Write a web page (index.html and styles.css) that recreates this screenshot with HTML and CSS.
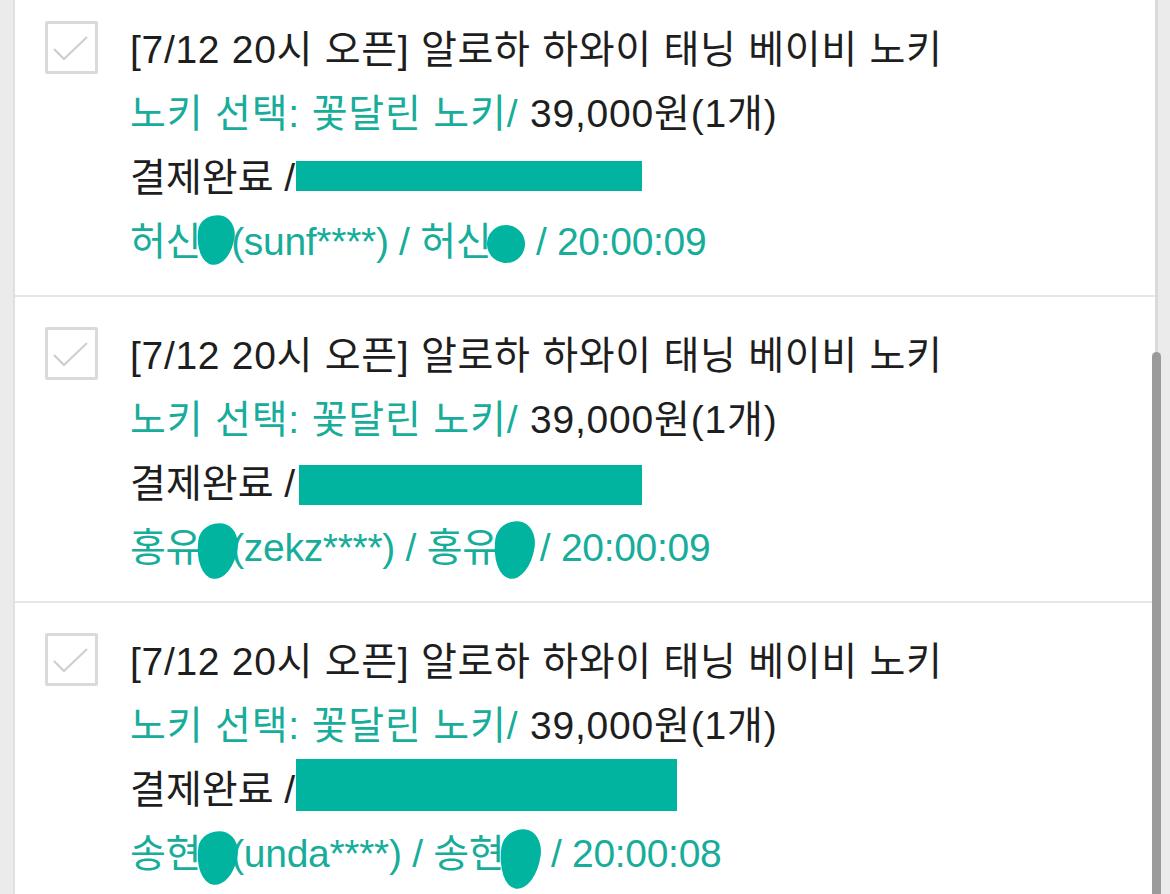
FILE: index.html
```html
<!DOCTYPE html>
<html lang="ko">
<head>
<meta charset="utf-8">
<title>주문 목록</title>
<link rel="stylesheet" href="styles.css">
</head>
<body>
<div class="frame">
  <div class="panel">
    <div class="list">
      <div class="item">
        <div class="check"><svg viewBox="0 0 53 53" width="53" height="53"><path d="M9 28 L19 38 L42 16" fill="none" stroke="#cfcfcf" stroke-width="2.2"/></svg></div>
        <div class="body">
          <div class="line title">[7/12 20시 오픈] 알로하 하와이 태닝 베이비 노키</div>
          <div class="line option"><span class="teal">노키 선택: 꽃달린 노키/</span> 39,000원(1개)</div>
          <div class="line">결제완료 /<span class="redact r1"></span></div>
          <div class="line buyer teal">허신<span class="blob b1"></span>(sunf****) / 허신<span class="blob b2"></span> / 20:00:09</div>
        </div>
      </div>
      <div class="item">
        <div class="check"><svg viewBox="0 0 53 53" width="53" height="53"><path d="M9 28 L19 38 L42 16" fill="none" stroke="#cfcfcf" stroke-width="2.2"/></svg></div>
        <div class="body">
          <div class="line title">[7/12 20시 오픈] 알로하 하와이 태닝 베이비 노키</div>
          <div class="line option"><span class="teal">노키 선택: 꽃달린 노키/</span> 39,000원(1개)</div>
          <div class="line">결제완료 /<span class="redact r2"></span></div>
          <div class="line buyer teal">홍유<span class="blob b3"></span>(zekz****) / 홍유<span class="blob b4"></span>/ 20:00:09</div>
        </div>
      </div>
      <div class="item">
        <div class="check"><svg viewBox="0 0 53 53" width="53" height="53"><path d="M9 28 L19 38 L42 16" fill="none" stroke="#cfcfcf" stroke-width="2.2"/></svg></div>
        <div class="body">
          <div class="line title">[7/12 20시 오픈] 알로하 하와이 태닝 베이비 노키</div>
          <div class="line option"><span class="teal">노키 선택: 꽃달린 노키/</span> 39,000원(1개)</div>
          <div class="line">결제완료 /<span class="redact r3"></span></div>
          <div class="line buyer teal">송현<span class="blob b5"></span>(unda****) / 송현<span class="blob b6"></span> / 20:00:08</div>
        </div>
      </div>
    </div>
  </div>
  <div class="thumb"></div>
</div>
</body>
</html>
```

FILE: styles.css
```css
html, body {
  margin: 0;
  padding: 0;
  background: #ebebeb;
}
body {
  width: 1170px;
  height: 894px;
  overflow: hidden;
  font-family: "Liberation Sans", "Noto Sans CJK KR", sans-serif;
  color: #1e1e1e;
}
.frame {
  position: relative;
  height: 894px;
  display: flex;
}
.panel {
  margin: 0 12px 0 13px;
  flex: 1;
  background: #fff;
  border-left: 2px solid #e0e0e0;
  border-right: 3px solid #dadada;
  overflow: hidden;
}
.list {
  margin-top: -9px;
}
.item {
  display: flex;
  gap: 32px;
  height: 304px;
  box-sizing: content-box;
  padding: 0 30px;
  border-bottom: 2px solid #e6e6e6;
}
.check {
  margin-top: 30px;
  width: 53px;
  height: 53px;
  box-sizing: border-box;
  border: 3px solid #dadada;
  border-radius: 2px;
  flex: none;
  position: relative;
}
.check svg {
  position: absolute;
  left: -3px;
  top: -3px;
}
.body {
  padding-top: 27px;
  font-size: 39px;
  line-height: 64px;
  white-space: nowrap;
}
.line {
  height: 64px;
}
.title {
  letter-spacing: 0.7px;
}
.option {
  letter-spacing: 0.8px;
}
.buyer {
  letter-spacing: -0.3px;
}
.teal {
  color: #17ad9a;
}
.redact {
  display: inline-block;
  background: #00b4a0;
}
.r1 {
  width: 346px;
  height: 30px;
  margin-left: 1px;
  vertical-align: 0;
}
.r2 {
  width: 343px;
  height: 40px;
  margin-left: 4px;
  vertical-align: -8px;
}
.r3 {
  width: 381px;
  height: 52px;
  margin-left: 1px;
  vertical-align: -8px;
}
.blob {
  display: inline-block;
  background: #00b4a0;
  width: 37px;
  height: 50px;
  vertical-align: -10px;
  border-radius: 55% 45% 50% 50% / 35% 40% 60% 65%;
  transform: rotate(8deg);
}
.b1 { margin: 0 -3px 0 -4px; }
.b2 { height: 38px; width: 38px; vertical-align: -8px; border-radius: 50%; margin-left: -4px; }
.b3 { height: 56px; width: 40px; vertical-align: -18px; margin: 0 -6px 0 -4px; }
.b4 { height: 58px; width: 40px; vertical-align: -18px; margin: 0 6px 0 -4px; }
.b5 { height: 54px; width: 40px; vertical-align: -18px; margin: 0 -6px 0 -4px; }
.b6 { height: 60px; width: 40px; vertical-align: -22px; margin-left: -4px; }
.thumb {
  position: absolute;
  left: 1152px;
  top: 352px;
  width: 9px;
  height: 560px;
  background: #9b9b9b;
  border-radius: 5px 5px 0 0;
}
```
